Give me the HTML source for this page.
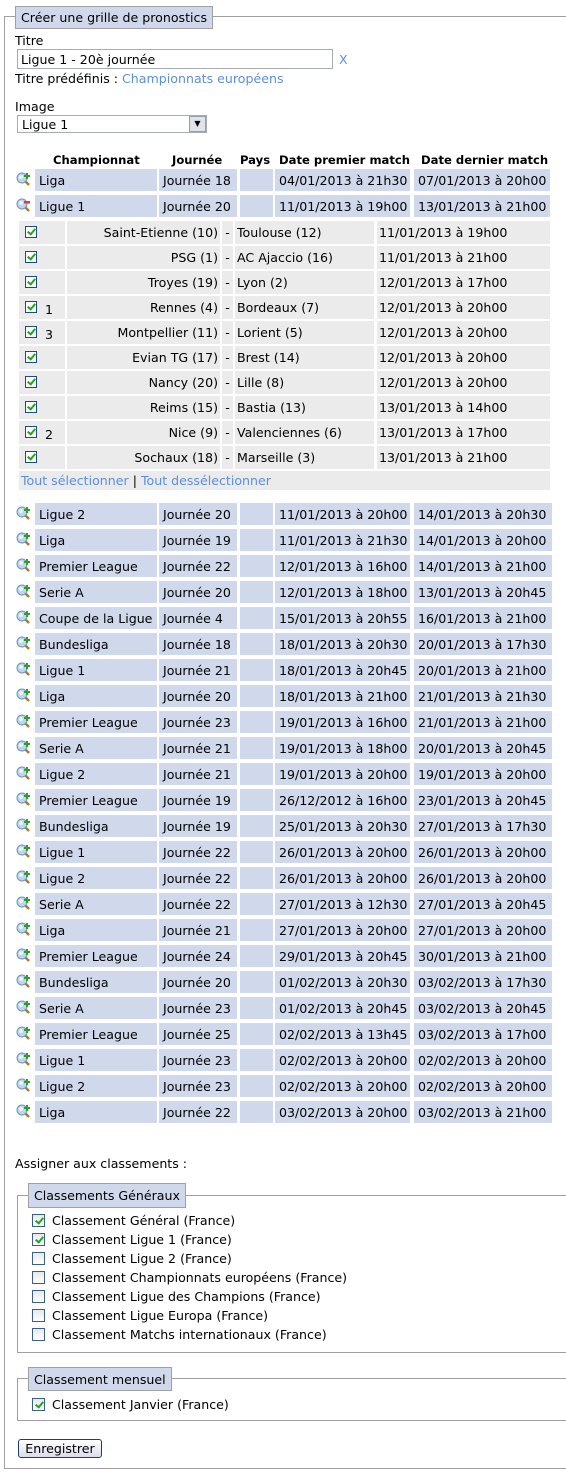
<!DOCTYPE html>
<html><head><meta charset="utf-8">
<style>
*{margin:0;padding:0;box-sizing:border-box}
body{width:566px;height:1473px;position:relative;background:#fff;font-family:"DejaVu Sans","Liberation Sans",sans-serif;font-size:12.6px;color:#000;overflow:hidden}
.a{position:absolute;white-space:nowrap}
.fs{position:absolute;border:1px solid #a0a0a0;border-right:none}
.lg{position:absolute;background:#d0d9ec;border:1px solid #a0a0a0;padding:0 5px;font-size:12.6px;white-space:nowrap}
.lnk{color:#5b8fe0}
.c{position:absolute;height:22px;line-height:23px;background:#d0d9ec;padding-left:4px;white-space:nowrap}
.s{position:absolute;height:23px;line-height:24px;background:#ebebeb;white-space:nowrap}
.cb{position:absolute;width:12px;height:12px;border:1px solid #1d4a80;background:#fff}
.cb.k::after{content:"";position:absolute;left:3px;top:0px;width:3px;height:6px;border:solid #1fa51f;border-width:0 2px 2px 0;transform:rotate(40deg)}
.cg{position:absolute;width:13px;height:13px;border:1px solid #3a5f8a;background:linear-gradient(#e8e8e8,#fff)}
.cg.k::after{content:"";position:absolute;left:4px;top:1px;width:3px;height:6px;border:solid #1fa51f;border-width:0 2px 2px 0;transform:rotate(40deg)}
.ic{position:absolute;width:15px;height:15px}
b{font-weight:bold;font-size:11.6px}
</style></head><body>

<div class="fs" style="left:4px;top:16px;width:600px;height:1453px"></div>
<div class="lg" style="left:15px;top:6px;height:23px;line-height:22px">Créer une grille de pronostics</div>

<div class="a" style="left:15px;top:33px">Titre</div>
<div class="a" style="left:17px;top:49px;width:316px;height:20px;border:1px solid #a5acb2;padding-left:3px;line-height:19px">Ligue 1 - 20è journée</div>
<div class="a lnk" style="left:339px;top:52px">X</div>
<div class="a" style="left:15px;top:71px">Titre prédéfinis : <span class="lnk">Championnats européens</span></div>

<div class="a" style="left:15px;top:99px">Image</div>
<div class="a" style="left:17px;top:115px;width:190px;height:18px;border:1px solid #a5acb2;padding-left:4px;line-height:17px">Ligue 1</div>
<div class="a" style="left:189px;top:116px;width:17px;height:16px;background:#dfe3ea;border:1px solid #98a0ac;text-align:center;font-size:8px;line-height:14px">&#9660;</div>

<div class="a" style="left:53px;top:152px"><b>Championnat</b></div>
<div class="a" style="left:172px;top:152px"><b>Journée</b></div>
<div class="a" style="left:240px;top:152px"><b>Pays</b></div>
<div class="a" style="left:279px;top:152px"><b>Date premier match</b></div>
<div class="a" style="left:421px;top:152px"><b>Date dernier match</b></div>

<svg width="0" height="0" style="position:absolute"><defs>
<g id="mg"><line x1="8" y1="8" x2="13" y2="13" stroke="#b07830" stroke-width="2.5"/><circle cx="6" cy="6" r="5" fill="#bcd6ef" stroke="#6f93b8"/><circle cx="5" cy="5" r="2" fill="#fff" opacity=".7"/></g>
</defs></svg>

<div id="rows"></div>

<div style="position:absolute;left:0;top:0">
<svg class="ic" style="left:16px;top:172px" viewBox="0 0 15 15"><use href="#mg"/><rect x="8" y="3" width="6" height="2" fill="#2e9e2e"/><rect x="10" y="1" width="2" height="6" fill="#2e9e2e"/></svg>
<div class="c" style="left:35px;top:169px;width:122px">Liga</div><div class="c" style="left:159px;top:169px;width:78px">Journée 18</div><div class="c" style="left:240px;top:169px;width:33px"></div><div class="c" style="left:275px;top:169px;width:135px">04/01/2013 à 21h30</div><div class="c" style="left:414px;top:169px;width:136px">07/01/2013 à 20h00</div>
<svg class="ic" style="left:16px;top:198px" viewBox="0 0 15 15"><use href="#mg"/><rect x="8" y="3" width="6" height="2.5" fill="#e03a3a"/></svg>
<div class="c" style="left:35px;top:195px;width:122px">Ligue 1</div><div class="c" style="left:159px;top:195px;width:78px">Journée 20</div><div class="c" style="left:240px;top:195px;width:33px"></div><div class="c" style="left:275px;top:195px;width:135px">11/01/2013 à 19h00</div><div class="c" style="left:414px;top:195px;width:136px">13/01/2013 à 21h00</div>
</div>

<div class="a" style="left:19px;top:221px;width:531px;height:269px;background:#fff"></div>
<div id="sub"></div>
<div class="s" style="left:19px;top:471px;width:531px;height:19px;line-height:19px;padding-left:2px"><span class="lnk">Tout sélectionner</span> | <span class="lnk">Tout dessélectionner</span></div>

<div class="a" style="left:15px;top:1156px">Assigner aux classements :</div>

<div class="fs" style="left:17px;top:1195px;width:600px;height:158px"></div>
<div class="lg" style="left:28px;top:1183px;height:25px;line-height:24px">Classements Généraux</div>
<div class="cg k" style="left:32px;top:1214px"></div><div class="a" style="left:52px;top:1213px">Classement Général (France)</div>
<div class="cg k" style="left:32px;top:1233px"></div><div class="a" style="left:52px;top:1232px">Classement Ligue 1 (France)</div>
<div class="cg" style="left:32px;top:1252px"></div><div class="a" style="left:52px;top:1251px">Classement Ligue 2 (France)</div>
<div class="cg" style="left:32px;top:1271px"></div><div class="a" style="left:52px;top:1270px">Classement Championnats européens (France)</div>
<div class="cg" style="left:32px;top:1290px"></div><div class="a" style="left:52px;top:1289px">Classement Ligue des Champions (France)</div>
<div class="cg" style="left:32px;top:1309px"></div><div class="a" style="left:52px;top:1308px">Classement Ligue Europa (France)</div>
<div class="cg" style="left:32px;top:1328px"></div><div class="a" style="left:52px;top:1327px">Classement Matchs internationaux (France)</div>

<div class="fs" style="left:17px;top:1378px;width:600px;height:43px"></div>
<div class="lg" style="left:28px;top:1367px;height:24px;line-height:23px">Classement mensuel</div>
<div class="cg k" style="left:32px;top:1398px"></div><div class="a" style="left:52px;top:1397px">Classement Janvier (France)</div>

<div class="a" style="left:18px;top:1439px;width:84px;height:19px;border:1px solid #1d3e6e;border-radius:3px;background:linear-gradient(#fff,#dcdcea);text-align:center;line-height:17px;font-size:12.6px">Enregistrer</div>

<script>
var M=[["Ligue 2","Journée 20","11/01/2013 à 20h00","14/01/2013 à 20h30"],["Liga","Journée 19","11/01/2013 à 21h30","14/01/2013 à 20h00"],["Premier League","Journée 22","12/01/2013 à 16h00","14/01/2013 à 21h00"],["Serie A","Journée 20","12/01/2013 à 18h00","13/01/2013 à 20h45"],["Coupe de la Ligue","Journée 4","15/01/2013 à 20h55","16/01/2013 à 21h00"],["Bundesliga","Journée 18","18/01/2013 à 20h30","20/01/2013 à 17h30"],["Ligue 1","Journée 21","18/01/2013 à 20h45","20/01/2013 à 21h00"],["Liga","Journée 20","18/01/2013 à 21h00","21/01/2013 à 21h30"],["Premier League","Journée 23","19/01/2013 à 16h00","21/01/2013 à 21h00"],["Serie A","Journée 21","19/01/2013 à 18h00","20/01/2013 à 20h45"],["Ligue 2","Journée 21","19/01/2013 à 20h00","19/01/2013 à 20h00"],["Premier League","Journée 19","26/12/2012 à 16h00","23/01/2013 à 20h45"],["Bundesliga","Journée 19","25/01/2013 à 20h30","27/01/2013 à 17h30"],["Ligue 1","Journée 22","26/01/2013 à 20h00","26/01/2013 à 20h00"],["Ligue 2","Journée 22","26/01/2013 à 20h00","26/01/2013 à 20h00"],["Serie A","Journée 22","27/01/2013 à 12h30","27/01/2013 à 20h45"],["Liga","Journée 21","27/01/2013 à 20h00","27/01/2013 à 20h00"],["Premier League","Journée 24","29/01/2013 à 20h45","30/01/2013 à 21h00"],["Bundesliga","Journée 20","01/02/2013 à 20h30","03/02/2013 à 17h30"],["Serie A","Journée 23","01/02/2013 à 20h45","03/02/2013 à 20h45"],["Premier League","Journée 25","02/02/2013 à 13h45","03/02/2013 à 17h00"],["Ligue 1","Journée 23","02/02/2013 à 20h00","02/02/2013 à 20h00"],["Ligue 2","Journée 23","02/02/2013 à 20h00","02/02/2013 à 20h00"],["Liga","Journée 22","03/02/2013 à 20h00","03/02/2013 à 21h00"]];
var h="";
M.forEach(function(r,i){var t=503+i*26;
h+='<svg class="ic" style="left:16px;top:'+(t+3)+'px" viewBox="0 0 15 15"><use href="#mg"/><rect x="8" y="3" width="6" height="2" fill="#2e9e2e"/><rect x="10" y="1" width="2" height="6" fill="#2e9e2e"/></svg>';
h+='<div class="c" style="left:35px;top:'+t+'px;width:122px">'+r[0]+'</div><div class="c" style="left:159px;top:'+t+'px;width:78px">'+r[1]+'</div><div class="c" style="left:240px;top:'+t+'px;width:33px"></div><div class="c" style="left:275px;top:'+t+'px;width:135px">'+r[2]+'</div><div class="c" style="left:414px;top:'+t+'px;width:138px">'+r[3]+'</div>';});
document.getElementById("rows").innerHTML=h;
var S=[["","Saint-Etienne (10)","Toulouse (12)","11/01/2013 à 19h00"],["","PSG (1)","AC Ajaccio (16)","11/01/2013 à 21h00"],["","Troyes (19)","Lyon (2)","12/01/2013 à 17h00"],["1","Rennes (4)","Bordeaux (7)","12/01/2013 à 20h00"],["3","Montpellier (11)","Lorient (5)","12/01/2013 à 20h00"],["","Evian TG (17)","Brest (14)","12/01/2013 à 20h00"],["","Nancy (20)","Lille (8)","12/01/2013 à 20h00"],["","Reims (15)","Bastia (13)","13/01/2013 à 14h00"],["2","Nice (9)","Valenciennes (6)","13/01/2013 à 17h00"],["","Sochaux (18)","Marseille (3)","13/01/2013 à 21h00"]];
h="";
S.forEach(function(r,i){var t=221+i*25;
h+='<div class="s" style="left:19px;top:'+t+'px;width:46px"></div><div class="cb k" style="left:25px;top:'+(t+5)+'px"></div><div class="a" style="left:45px;top:'+(t+6)+'px">'+r[0]+'</div>';
h+='<div class="s" style="left:67px;top:'+t+'px;width:153px;text-align:right;padding-right:2px">'+r[1]+'</div><div class="s" style="left:222px;top:'+t+'px;width:11px;text-align:center">-</div><div class="s" style="left:235px;top:'+t+'px;width:139px;padding-left:2px">'+r[2]+'</div><div class="s" style="left:377px;top:'+t+'px;width:173px;padding-left:2px">'+r[3]+'</div>';});
document.getElementById("sub").innerHTML=h;
</script>
</body></html>
